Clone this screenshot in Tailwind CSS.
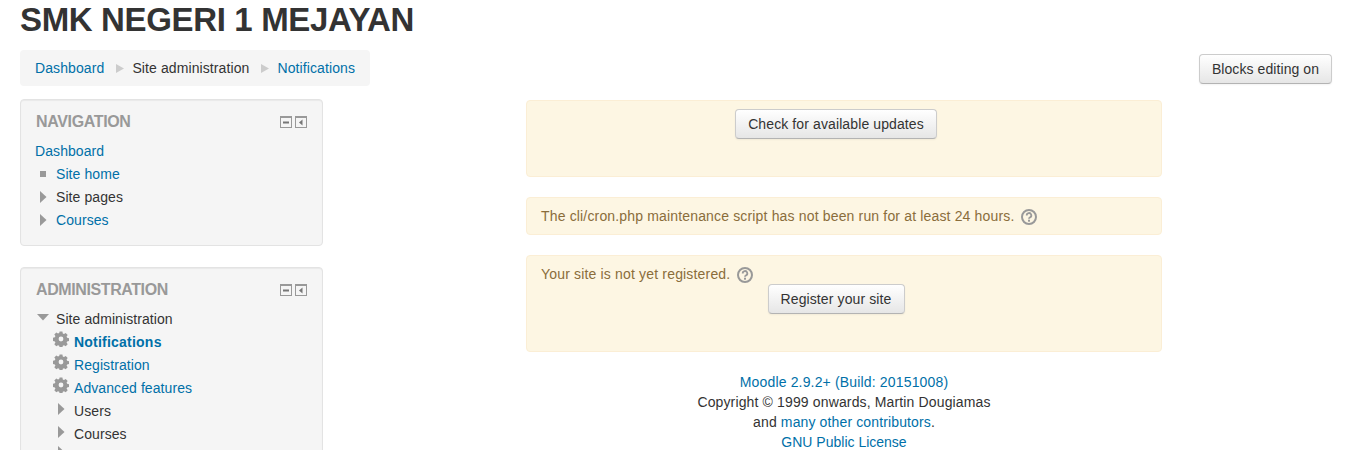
<!DOCTYPE html>
<html>
<head>
  <meta charset="UTF-8">
  <title>SMK Negeri 1 Mejayan: Notifications</title>
  <script src="https://cdn.jsdelivr.net/npm/@tailwindcss/browser@4"></script>
</head>
<body class="bg-white text-[#333] font-['Liberation_Sans',Arial,sans-serif] text-[14px] leading-[20px] tracking-[0.08px] h-[450px] overflow-hidden">
  <div class="px-5">
    <h1 class="text-[33px] leading-[40px] font-bold tracking-[-0.35px] h-[50px]">SMK NEGERI 1 MEJAYAN</h1>

    <div class="flex justify-between items-center h-[36px]">
      <nav class="flex items-center h-[36px] w-[350px] pl-[15px] bg-[#f5f5f5] rounded-[4px] tracking-[0.1px]">
        <a href="#" class="text-[#0070a8]">Dashboard</a>
        <svg class="ml-[12px] mr-[8px] mt-px" width="8" height="9" viewBox="0 0 8 9"><path d="M0 0l8 4.5L0 9z" fill="#ccc"/></svg>
        <span>Site administration</span>
        <svg class="ml-[12px] mr-[8px] mt-px" width="8" height="9" viewBox="0 0 8 9"><path d="M0 0l8 4.5L0 9z" fill="#ccc"/></svg>
        <a href="#" class="text-[#0070a8]">Notifications</a>
      </nav>
      <button class="mr-[-3px] mt-[2px] h-[30px] w-[133px] rounded-[4px] border border-[#ccc] border-b-[#b3b3b3] bg-gradient-to-b from-white to-[#e6e6e6] shadow-[0_1px_2px_rgba(0,0,0,0.05)]">Blocks editing on</button>
    </div>

    <div class="flex items-start mt-[13px]">
      <aside class="w-[303px] shrink-0 flex flex-col gap-[21px]">
        <section class="h-[147px] bg-[#f5f5f5] border border-[#e3e3e3] rounded-[4px] px-[14px] pt-[12px] shadow-[inset_0_1px_1px_rgba(0,0,0,0.05)]">
          <div class="flex justify-between items-center h-[20px] pr-px">
            <h2 class="pl-px text-[16px] font-bold text-[#999] tracking-[-0.35px]">NAVIGATION</h2>
            <div class="flex gap-[3px]">
              <svg width="12" height="12" viewBox="0 0 12 12"><rect x=".5" y=".5" width="11" height="11" fill="#f5f5f5" stroke="#999"/><rect width="12" height="2" fill="#999"/><rect x="3" y="5.5" width="6" height="2" fill="#777"/></svg>
              <svg width="12" height="12" viewBox="0 0 12 12"><rect x=".5" y=".5" width="11" height="11" fill="#f5f5f5" stroke="#999"/><rect width="12" height="2" fill="#999"/><path d="M7.5 3.5v6L4 6.5z" fill="#777"/></svg>
            </div>
          </div>
          <ul class="mt-[9px] flex flex-col gap-[3px]">
            <li><a href="#" class="text-[#0070a8]">Dashboard</a></li>
            <li class="flex items-center gap-[10px] pl-[5px]"><span class="w-[6px] h-[6px] bg-[#999]"></span><a href="#" class="text-[#0070a8]">Site home</a></li>
            <li class="flex items-center gap-[9px] pl-[5px]"><svg width="7" height="12" viewBox="0 0 7 12"><path d="M0 0l6.5 6L0 12z" fill="#999"/></svg><span>Site pages</span></li>
            <li class="flex items-center gap-[9px] pl-[5px]"><svg width="7" height="12" viewBox="0 0 7 12"><path d="M0 0l6.5 6L0 12z" fill="#999"/></svg><a href="#" class="text-[#0070a8]">Courses</a></li>
          </ul>
        </section>

        <section class="h-[300px] bg-[#f5f5f5] border border-[#e3e3e3] rounded-[4px] px-[14px] pt-[12px] shadow-[inset_0_1px_1px_rgba(0,0,0,0.05)]">
          <div class="flex justify-between items-center h-[20px] pr-px">
            <h2 class="pl-px text-[16px] font-bold text-[#999] tracking-[-0.4px]">ADMINISTRATION</h2>
            <div class="flex gap-[3px]">
              <svg width="12" height="12" viewBox="0 0 12 12"><rect x=".5" y=".5" width="11" height="11" fill="#f5f5f5" stroke="#999"/><rect width="12" height="2" fill="#999"/><rect x="3" y="5.5" width="6" height="2" fill="#777"/></svg>
              <svg width="12" height="12" viewBox="0 0 12 12"><rect x=".5" y=".5" width="11" height="11" fill="#f5f5f5" stroke="#999"/><rect width="12" height="2" fill="#999"/><path d="M7.5 3.5v6L4 6.5z" fill="#777"/></svg>
            </div>
          </div>
          <ul class="mt-[9px] flex flex-col gap-[3px]">
            <li class="flex items-center gap-[7px] pl-[2px]"><svg class="-mt-[3px]" width="12" height="7" viewBox="0 0 12 7"><path d="M0 0h12L6 6.5z" fill="#999"/></svg><span>Site administration</span></li>
            <li class="flex gap-[5px] pl-[18px]"><svg class="-mt-[1px]" width="16" height="16" viewBox="0 0 16 16"><path fill="#999" fill-rule="evenodd" d="M6.6.5h2.8l.4 2 1.2.5 1.7-1.1 2 2-1.1 1.7.5 1.2 2 .4v2.8l-2 .4-.5 1.2 1.1 1.7-2 2-1.7-1.1-1.2.5-.4 2H6.6l-.4-2-1.2-.5-1.7 1.1-2-2 1.1-1.7-.5-1.2-2-.4V6.7l2-.4.5-1.2L1.3 3.4l2-2L5 2.5l1.2-.5zM8 5.6a2.4 2.4 0 1 0 0 4.8 2.4 2.4 0 0 0 0-4.8z"/></svg><a href="#" class="text-[#0070a8] font-bold tracking-[0.22px]">Notifications</a></li>
            <li class="flex gap-[5px] pl-[18px]"><svg class="-mt-[1px]" width="16" height="16" viewBox="0 0 16 16"><path fill="#999" fill-rule="evenodd" d="M6.6.5h2.8l.4 2 1.2.5 1.7-1.1 2 2-1.1 1.7.5 1.2 2 .4v2.8l-2 .4-.5 1.2 1.1 1.7-2 2-1.7-1.1-1.2.5-.4 2H6.6l-.4-2-1.2-.5-1.7 1.1-2-2 1.1-1.7-.5-1.2-2-.4V6.7l2-.4.5-1.2L1.3 3.4l2-2L5 2.5l1.2-.5zM8 5.6a2.4 2.4 0 1 0 0 4.8 2.4 2.4 0 0 0 0-4.8z"/></svg><a href="#" class="text-[#0070a8]">Registration</a></li>
            <li class="flex gap-[5px] pl-[18px]"><svg class="-mt-[1px]" width="16" height="16" viewBox="0 0 16 16"><path fill="#999" fill-rule="evenodd" d="M6.6.5h2.8l.4 2 1.2.5 1.7-1.1 2 2-1.1 1.7.5 1.2 2 .4v2.8l-2 .4-.5 1.2 1.1 1.7-2 2-1.7-1.1-1.2.5-.4 2H6.6l-.4-2-1.2-.5-1.7 1.1-2-2 1.1-1.7-.5-1.2-2-.4V6.7l2-.4.5-1.2L1.3 3.4l2-2L5 2.5l1.2-.5zM8 5.6a2.4 2.4 0 1 0 0 4.8 2.4 2.4 0 0 0 0-4.8z"/></svg><a href="#" class="text-[#0070a8]">Advanced features</a></li>
            <li class="flex gap-[9px] pl-[23px]"><svg class="mt-[2px]" width="7" height="12" viewBox="0 0 7 12"><path d="M0 0l6.5 6L0 12z" fill="#999"/></svg><span>Users</span></li>
            <li class="flex gap-[9px] pl-[23px]"><svg class="mt-[2px]" width="7" height="12" viewBox="0 0 7 12"><path d="M0 0l6.5 6L0 12z" fill="#999"/></svg><span>Courses</span></li>
            <li class="flex gap-[9px] pl-[23px]"><svg class="-mt-[1px]" width="7" height="12" viewBox="0 0 7 12"><path d="M0 0l6.5 6L0 12z" fill="#999"/></svg></li>
          </ul>
        </section>
      </aside>

      <main class="ml-[203px] w-[636px] shrink-0 pt-px flex flex-col gap-[20px]">
        <div class="h-[77px] bg-[#fdf6e3] border border-[#fbeed5] rounded-[4px] pl-[14px] pr-[30px] pt-[8px] flex justify-center items-start">
          <button class="h-[30px] w-[202px] rounded-[4px] border border-[#ccc] border-b-[#b3b3b3] bg-gradient-to-b from-white to-[#e6e6e6] shadow-[0_1px_2px_rgba(0,0,0,0.05)] tracking-[0.11px]">Check for available updates</button>
        </div>
        <div class="h-[38px] bg-[#fdf6e3] border border-[#fbeed5] rounded-[4px] px-[14px] flex items-center text-[#8a6d3b] tracking-[0.16px]">
          The cli/cron.php maintenance script has not been run for at least 24 hours.
          <svg class="ml-[6px] mt-px" width="16" height="16" viewBox="0 0 16 16"><circle cx="8" cy="8" r="7" fill="none" stroke="#999" stroke-width="2"/><path d="M5.7 6.4a2.3 2.3 0 1 1 3.5 1.9c-.8.5-1.2.8-1.2 1.5" fill="none" stroke="#999" stroke-width="1.8"/><rect x="7" y="10.7" width="2" height="2" fill="#999"/></svg>
        </div>
        <div class="h-[97px] bg-[#fdf6e3] border border-[#fbeed5] rounded-[4px] pl-[14px] pr-[30px] pt-[8px] text-[#8a6d3b]">
          <div class="flex items-center h-[20px] tracking-[0.17px]">
            Your site is not yet registered.
            <svg class="ml-[7px] mt-px" width="16" height="16" viewBox="0 0 16 16"><circle cx="8" cy="8" r="7" fill="none" stroke="#999" stroke-width="2"/><path d="M5.7 6.4a2.3 2.3 0 1 1 3.5 1.9c-.8.5-1.2.8-1.2 1.5" fill="none" stroke="#999" stroke-width="1.8"/><rect x="7" y="10.7" width="2" height="2" fill="#999"/></svg>
          </div>
          <div class="flex justify-center">
            <button class="h-[30px] w-[137px] rounded-[4px] border border-[#ccc] border-b-[#b3b3b3] bg-gradient-to-b from-white to-[#e6e6e6] shadow-[0_1px_2px_rgba(0,0,0,0.05)] text-[#333] tracking-[0.11px]">Register your site</button>
          </div>
        </div>
        <div class="text-center">
          <a href="#" class="text-[#0070a8] block tracking-[0.16px]">Moodle 2.9.2+ (Build: 20151008)</a>
          <p class="tracking-[0.14px]">Copyright © 1999 onwards, Martin Dougiamas</p>
          <p class="tracking-[0.13px]">and <a href="#" class="text-[#0070a8]">many other contributors</a>.</p>
          <a href="#" class="text-[#0070a8] block tracking-[0px]">GNU Public License</a>
        </div>
      </main>
    </div>
  </div>
</body>
</html>
